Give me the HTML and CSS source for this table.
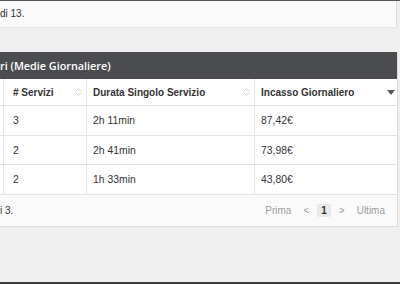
FILE: index.html
```html
<!DOCTYPE html>
<html lang="it">
<head>
<meta charset="utf-8">
<title>Servizi</title>
<link rel="stylesheet" href="styles.css">
</head>
<body>
<div class="topline"></div>
<div class="prev-panel"><span class="info">di 13.</span></div>
<div class="card">
  <div class="card-head">ri (Medie Giornaliere)</div>
  <div class="tbl">
    <div class="row head">
      <div class="cell c0"></div>
      <div class="cell c1"><span>#&nbsp;Servizi</span><svg class="sort" width="7" height="10" viewBox="0 0 7 10"><polyline points="1,4 3.5,1.5 6,4"/><polyline points="1,6 3.5,8.5 6,6"/></svg></div>
      <div class="cell c2"><span>Durata Singolo Servizio</span><svg class="sort" width="7" height="10" viewBox="0 0 7 10"><polyline points="1,4 3.5,1.5 6,4"/><polyline points="1,6 3.5,8.5 6,6"/></svg></div>
      <div class="cell c3"><span>Incasso Giornaliero</span><svg class="caret" width="8" height="5" viewBox="0 0 8 5"><polygon points="0,0 8,0 4,5"/></svg></div>
    </div>
    <div class="row r1">
      <div class="cell c0"></div>
      <div class="cell c1">3</div>
      <div class="cell c2">2h 11min</div>
      <div class="cell c3">87,42€</div>
    </div>
    <div class="row r2">
      <div class="cell c0"></div>
      <div class="cell c1">2</div>
      <div class="cell c2">2h 41min</div>
      <div class="cell c3">73,98€</div>
    </div>
    <div class="row r3">
      <div class="cell c0"></div>
      <div class="cell c1">2</div>
      <div class="cell c2">1h 33min</div>
      <div class="cell c3">43,80€</div>
    </div>
  </div>
  <div class="card-foot">
    <span class="info">i 3.</span>
    <nav class="pager">
      <span class="pg">Prima</span>
      <span class="pg arrow">&lt;</span>
      <span class="pg current">1</span>
      <span class="pg arrow">&gt;</span>
      <span class="pg">Ultima</span>
    </nav>
  </div>
</div>
<div class="filler"></div>
<div class="bottombar"></div>
</body>
</html>
```

FILE: styles.css
```css
html, body {
  margin: 0;
  padding: 0;
}
body {
  width: 400px;
  height: 284px;
  overflow: hidden;
  background: #efefef;
  font-family: "Liberation Sans", Arial, sans-serif;
  color: #333;
  display: flex;
  flex-direction: column;
}
.topline {
  height: 1px;
  background: #555;
  flex: none;
}
.prev-panel {
  flex: none;
  height: 26px;
  width: 397px;
  background: #fafafa;
  border-right: 1px solid #dcdcdc;
  border-bottom: 1px solid #e4e4e4;
  display: flex;
  align-items: center;
  padding-bottom: 1px;
  box-sizing: border-box;
  height: 27px;
}
.info {
  font-size: 10px;
  color: #333;
}
.card {
  flex: none;
  margin-top: 24px;
  width: 397px;
  background: #fff;
  border-right: 1px solid #dcdcdc;
  border-bottom: 1px solid #dadada;
}
.card-head {
  height: 27px;
  background: #4b4c4f;
  color: #fff;
  font-family: "Open Sans", "Liberation Sans", sans-serif;
  font-weight: 600;
  font-size: 10.8px;
  display: flex;
  align-items: center;
}
.row {
  display: grid;
  grid-template-columns: 4px 83px 168px 1fr;
  border-bottom: 1px solid #e3e3e3;
  font-size: 10.4px;
}
.row.head { height: 26px; font-weight: bold; font-size: 10px; }
.row.r1 { height: 29px; }
.row.r2 { height: 28px; }
.row.r3 { height: 29px; }
.cell {
  display: flex;
  align-items: center;
  border-right: 1px solid #e3e3e3;
  padding-left: 6px;
  padding-right: 4px;
  min-width: 0;
}
.cell.c0 { padding: 0; }
.cell.c1 { padding-left: 9px; }
.cell.c3 { border-right: none; padding-right: 2px; }
.head .cell { justify-content: space-between; }
.sort {
  fill: none;
  stroke: #d0d0d0;
  stroke-width: 1;
}
.caret {
  fill: #555;
}
.card-foot {
  height: 31px;
  background: #fafafa;
  display: flex;
  align-items: center;
  justify-content: space-between;
}
.pager {
  display: flex;
  align-items: center;
  padding-right: 12px;
  font-size: 10px;
  color: #9a9a9a;
}
.pg.arrow { margin: 0 8px 0 12px; }
.pg.arrow + .pg.current + .pg.arrow { margin: 0 12px 0 8px; }
.pg.current {
  background: #e9e9e9;
  color: #333;
  font-weight: bold;
  padding: 2px 4px;
  border-radius: 2px;
  line-height: 9px;
}
.filler { flex: 1; }
.bottombar {
  flex: none;
  height: 2px;
  background: #3c3c3c;
}
```
